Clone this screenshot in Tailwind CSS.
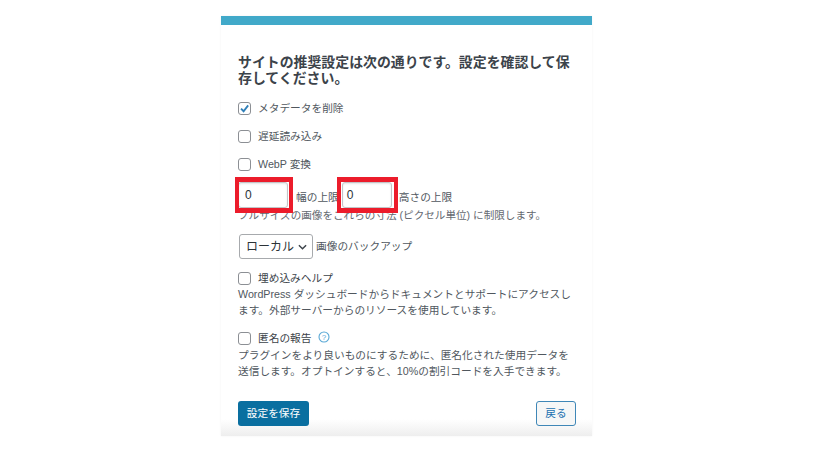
<!doctype html>
<html lang="ja"><head><meta charset="utf-8">
<script src="https://cdn.jsdelivr.net/npm/@tailwindcss/browser@4"></script>
</head>
<body class="bg-white w-[817px] h-[457px] overflow-hidden font-['Liberation_Sans','Noto_Sans_CJK_JP',sans-serif] text-[#50575e] text-[10.7px]">
<div class="w-[371px] ml-[221px] mt-[16px] h-[420px] flex flex-col bg-linear-to-b from-white from-[96%] to-[#eeeeee] shadow-[0_0_2px_rgba(0,0,0,0.06)]">
  <div class="h-[9px] bg-[#41a9c9] shrink-0"></div>
  <div class="flex flex-col flex-1 pl-[17px] pr-[16px]">
    <h1 class="mt-[29px] text-[13.9px] leading-[16px] font-bold text-[#3c434a] w-[340px]">サイトの推奨設定は次の通りです。設定を確認して保存してください。</h1>
    <label class="mt-[14px] h-[16px] flex items-center gap-[7px]">
      <span class="w-[13px] h-[13px] rounded-[3px] border border-[#8c8f94] bg-white flex items-center justify-center">
        <svg viewBox="0 0 12 12" class="w-[11px] h-[11px]"><path d="M2.2 6.2 L5 9 L10 2.6" fill="none" stroke="#2f7fb8" stroke-width="2"/></svg>
      </span>
      <span>メタデータを削除</span>
    </label>
    <label class="mt-[12px] h-[16px] flex items-center gap-[7px]">
      <span class="w-[13px] h-[13px] rounded-[3px] border border-[#8c8f94] bg-white"></span><span>遅延読み込み</span>
    </label>
    <label class="mt-[12px] h-[16px] flex items-center gap-[7px]">
      <span class="w-[13px] h-[13px] rounded-[3px] border border-[#8c8f94] bg-white"></span><span>WebP 変換</span>
    </label>
    <div class="mt-[5px] flex items-center h-[36px]">
      <div class="relative w-[50px] h-[26px] rounded-[3px] border border-[#c3c4c7] shadow-[inset_0_1px_2px_rgba(0,0,0,0.1)] pl-[6px] flex items-center text-[12px] text-[#2c3338]">0
        <div class="absolute left-[-4px] top-[-6px] w-[58px] h-[36px] border-x-[4px] border-y-[5px] border-[#ec1c2b]"></div>
      </div>
      <span class="ml-[8px] mt-[4px]">幅の上限</span>
      <div class="relative w-[50px] h-[26px] ml-[3px] rounded-[3px] border border-[#c3c4c7] shadow-[inset_0_1px_2px_rgba(0,0,0,0.1)] pl-[4px] flex items-center text-[12px] text-[#2c3338]">0
        <div class="absolute left-[-6px] top-[-6px] w-[61px] h-[36px] border-x-[4px] border-y-[5px] border-[#ec1c2b]"></div>
      </div>
      <span class="ml-[7px] mt-[4px]">高さの上限</span>
    </div>
    <div class="mt-[-6px] leading-[16px] text-[10.6px] text-[#646970]">フルサイズの画像をこれらの寸法 (ピクセル単位) に制限します。</div>
    <div class="mt-[11px] flex items-center h-[25px]">
      <div class="w-[74px] h-[25px] ml-[1px] rounded-[3px] border border-[#a7aaad] flex items-center pl-[6px] gap-[4px] text-[12px] text-[#2c3338]">
        <span>ローカル</span>
        <svg viewBox="0 0 10 6" class="w-[9px] h-[6px]"><path d="M1 1 L5 5 L9 1" fill="none" stroke="#3c434a" stroke-width="1.6"/></svg>
      </div>
      <span class="ml-[3px] mb-[1px]">画像のバックアップ</span>
    </div>
    <label class="mt-[11px] h-[16px] flex items-center gap-[7px]">
      <span class="w-[13px] h-[13px] rounded-[3px] border border-[#8c8f94] bg-white"></span><span class="text-[#3c434a]">埋め込みヘルプ</span>
    </label>
    <p class="leading-[16px] text-[#50575e] w-[338px]">WordPress ダッシュボードからドキュメントとサポートにアクセスします。外部サーバーからのリソースを使用しています。</p>
    <label class="mt-[12px] h-[16px] flex items-center gap-[7px]">
      <span class="w-[13px] h-[13px] rounded-[3px] border border-[#8c8f94] bg-white"></span><span class="text-[#3c434a]">匿名の報告</span>
      <svg viewBox="0 0 12 12" class="w-[12px] h-[12px] -mt-[3px]"><circle cx="6" cy="6" r="5" fill="none" stroke="#5aa9d6" stroke-width="1.1"/><text x="6" y="9" text-anchor="middle" font-size="8" fill="#5aa9d6" font-family="Liberation Sans">?</text></svg>
    </label>
    <p class="mt-[1px] leading-[16px] text-[#50575e] w-[338px]">プラグインをより良いものにするために、匿名化された使用データを送信します。オプトインすると、10%の割引コードを入手できます。</p>
    <div class="mt-[22px] flex justify-between items-center">
      <div class="w-[71px] h-[25px] rounded-[3px] bg-[#0a6fa0] text-white flex items-center justify-center">設定を保存</div>
      <div class="w-[40px] h-[25px] rounded-[3px] border border-[#3f87b7] bg-[#f6f7f7] text-[#2271b1] flex items-center justify-center">戻る</div>
    </div>
  </div>
</div>
</body></html>
